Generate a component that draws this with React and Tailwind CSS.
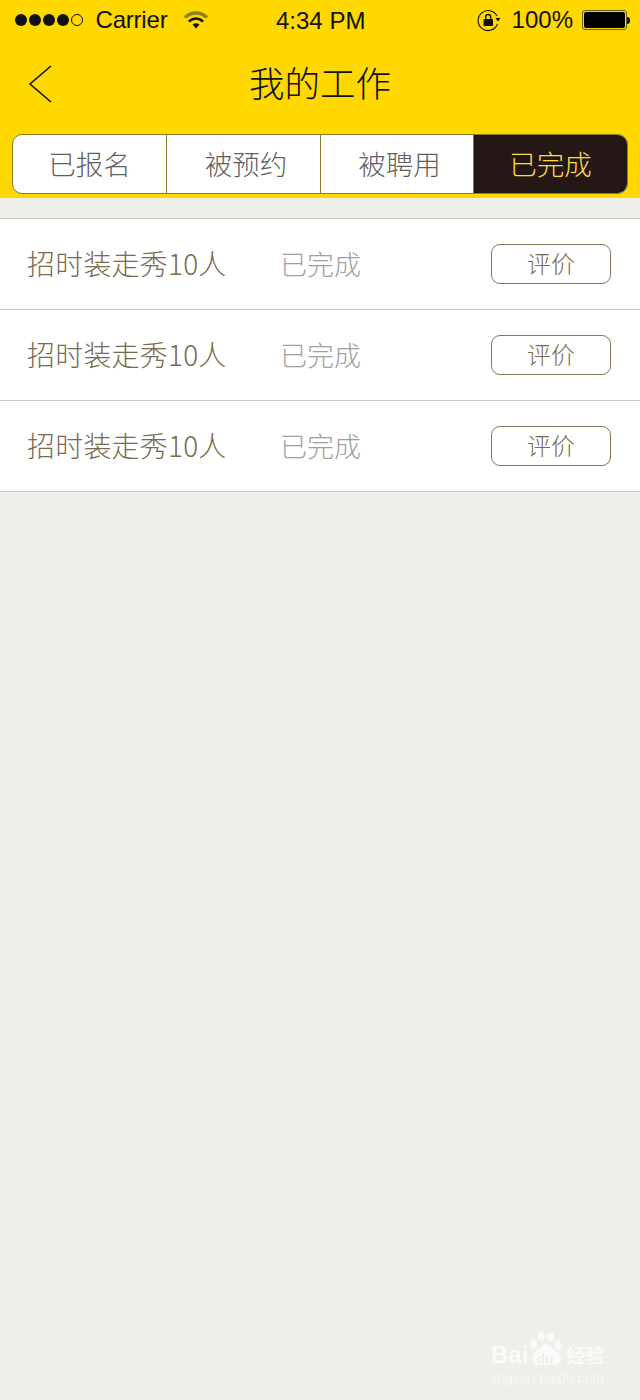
import React from 'react';

const cjk = 'font-["Noto_Sans_CJK_SC","Liberation_Sans",sans-serif]';
const tabs = [
  { label: '已报名', cls: 'w-[154px]' },
  { label: '被预约', cls: 'w-[154px] pl-[5px]' },
  { label: '被聘用', cls: 'w-[153px] pl-[5px]' },
];
const jobs = [1, 2, 3];

function Wifi() {
  return (
    <svg width="26" height="20" viewBox="0 0 26 20" fill="none">
      <path d="M2 7.500C8.500 1.500 17.500 1.500 24 7.500" stroke="#8f8223" strokeWidth="3.500" />
      <path d="M5.800 11.500C10.500 7.500 15.500 7.500 20.200 11.500" stroke="#111" strokeWidth="2.500" />
      <path d="M9.500 14.500C11.800 12.800 14.200 12.800 16.500 14.500L13 18.500Z" fill="#111" />
    </svg>
  );
}

function RotationLock() {
  return (
    <svg width="24" height="24" viewBox="0 0 24 24" fill="none">
      <path d="M20 8A10 10 0 1 0 20.500 16" stroke="#111" strokeWidth="1.100" />
      <path d="M18.500 10H23.500L21 13.500Z" fill="#111" />
      <rect x="6.500" y="11" width="9.500" height="7" rx="0.800" fill="#111" />
      <path d="M8.700 11V9a2.500 2.500 0 0 1 5 0V11" stroke="#111" strokeWidth="1.400" />
    </svg>
  );
}

function Paw() {
  return (
    <svg width="34" height="36" viewBox="0 0 34 36" fill="#fff">
      <ellipse cx="4" cy="13" rx="3.500" ry="4.500" />
      <ellipse cx="11" cy="5" rx="3.500" ry="4.500" />
      <ellipse cx="21" cy="6" rx="3.500" ry="4.500" />
      <ellipse cx="28" cy="14" rx="3.500" ry="4.500" />
      <path d="M16 13C11 13 9 19 4 22C0 26 2 35 10 34C14 33.500 19 33.500 23 34C31 35 33 26 29 22C24 19 21 13 16 13Z" />
    </svg>
  );
}

function StatusBar() {
  return (
    <div className='relative flex h-[40px] items-center justify-between font-["Liberation_Sans",sans-serif] text-[24px] text-[#111]'>
      <div className="flex items-center pl-[15px]">
        <div className="flex gap-[2.500px]">
          {[1, 2, 3, 4].map((n) => (
            <span key={n} className="h-[11.500px] w-[11.500px] rounded-full bg-[#111]" />
          ))}
          <span className="h-[11.500px] w-[11.500px] rounded-full border border-[#111]" />
        </div>
        <span className="ml-[13px] tracking-[-0.2px]">Carrier</span>
        <span className="ml-[16px]"><Wifi /></span>
      </div>
      <span className="absolute left-[276px] top-[3px]">4:34 PM</span>
      <div className="flex items-center pr-[10px]">
        <RotationLock />
        <span className="ml-[11px]">100%</span>
        <div className="ml-[9px] flex items-center">
          <div className="h-[20px] w-[45px] rounded-[3px] border border-[#6d6011] p-[1px]">
            <div className="h-full w-full rounded-[2px] bg-black" />
          </div>
          <div className="h-[7px] w-[3px] rounded-r-sm bg-[#111]" />
        </div>
      </div>
    </div>
  );
}

function Tabs() {
  return (
    <div className={`mx-[12px] flex h-[60px] overflow-hidden rounded-[10px] border border-[#8a7a2c] bg-white text-[27.500px] ${cjk}`}>
      {tabs.map((t) => (
        <div key={t.label} className={`flex items-center justify-center border-r border-[#8a7a2c] font-light text-[#5f5f5f] ${t.cls}`}>
          {t.label}
        </div>
      ))}
      <div className="flex flex-1 items-center justify-center bg-[#231815] font-light text-[#ffdc40]">已完成</div>
    </div>
  );
}

function JobRow() {
  return (
    <div className="flex h-[91px] items-center border-b border-[#c8c8c8] bg-white pr-[29px] pl-[27px]">
      <span className="mb-[2px] w-[253px] whitespace-nowrap text-[28px] font-light tracking-[0.2px] text-[#7a6a4e]">招时装走秀10人</span>
      <span className="text-[27px] font-light text-[#9f9f9f]">已完成</span>
      <button className="ml-auto flex h-[40px] w-[120px] items-center justify-center rounded-[9px] border border-[#85755a] pb-[2px] text-[24px] font-light text-[#7a6a4e]">
        评价
      </button>
    </div>
  );
}

export default function App() {
  return (
    <div className={`relative h-[1400px] w-[640px] overflow-hidden bg-[#eeeeea] ${cjk}`}>
      <div className="h-[198px] bg-[#ffd800]">
        <StatusBar />
        <div className="relative flex h-[94px] items-center justify-center pb-[10px]">
          <svg className="absolute left-[28px] top-[24px]" width="26" height="40" viewBox="0 0 26 40" fill="none" stroke="#111" strokeWidth="1.600">
            <path d="M23 2L2 20L23 38" />
          </svg>
          <span className="text-[35.500px] font-light text-[#111]">我的工作</span>
        </div>
        <Tabs />
      </div>
      <div className="mt-[20px] border-t border-[#c8c8c8]">
        {jobs.map((j) => (
          <JobRow key={j} />
        ))}
      </div>
      <div className="absolute left-[491px] top-[1343px] w-[120px] text-white opacity-75">
        <div className="flex h-[24px] items-center font-['Liberation_Sans',sans-serif]">
          <span className="text-[24px] font-bold leading-[24px]">Bai</span>
          <span className="relative ml-[1px] h-[24px] w-[36px]">
            <span className="absolute left-[1px] -top-[12px]"><Paw /></span>
            <span className="absolute bottom-[1px] left-[7px] text-[14px] font-bold leading-none text-[#eeeeea]">du</span>
          </span>
          <span className={`ml-[1px] text-[19px] font-bold leading-[24px] ${cjk}`}>经验</span>
        </div>
        <div className="mt-[3px] whitespace-nowrap font-['Liberation_Sans',sans-serif] text-[14px] leading-[16px] opacity-80">jingyan.baidu.com</div>
      </div>
    </div>
  );
}
